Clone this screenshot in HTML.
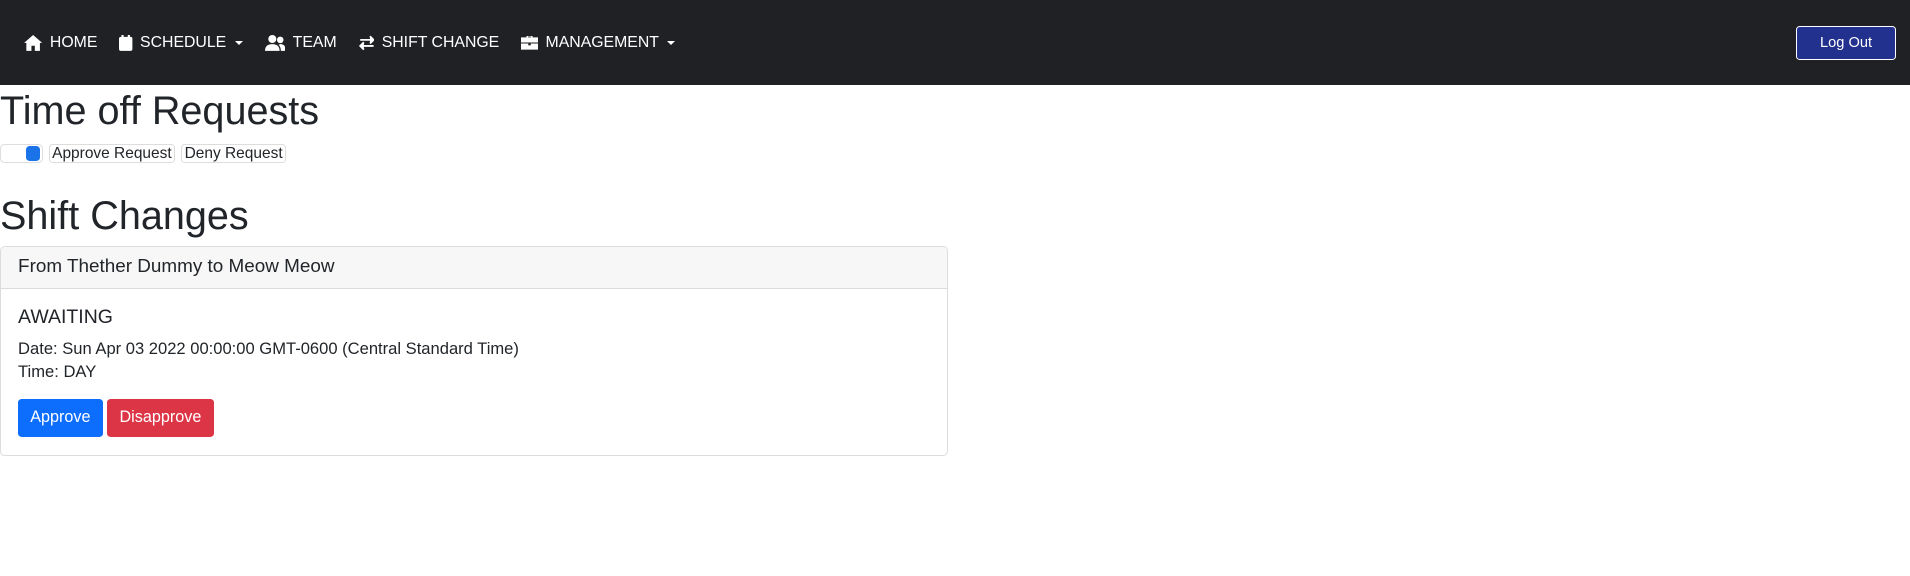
<!DOCTYPE html>
<html><head><meta charset="utf-8"><style>
html,body{margin:0;padding:0;background:#fff;overflow:hidden}
body{zoom:1.2185;font-family:"Liberation Sans",Arial,sans-serif;color:#212529;width:1568px;height:473px}
.nav{background:#1f2125;height:70px;position:relative}
.nav .items{position:absolute;left:20px;top:0;height:70px;display:flex;align-items:center;color:#fff;font-size:13px}
.nav .it{display:flex;align-items:center;margin-right:18px}
.nav svg{margin-right:6px;fill:#fff}
.caret{display:inline-block;width:0;height:0;border-left:4px solid transparent;border-right:4px solid transparent;border-top:4px solid #fff;margin-left:7px}
.logout{position:absolute;left:1474px;top:21px;width:82px;height:28px;box-sizing:border-box;border:1px solid #fff;border-radius:3px;background:#22318e;color:#fff;font-size:12px;display:flex;align-items:center;justify-content:center}
h1,h2{margin:0;font-weight:500;font-size:32.5px;line-height:1.2}
h1{position:absolute;top:72px;left:0}
h2{position:absolute;top:158px;left:0}
.row{position:absolute;top:118px;left:0;display:flex;font-size:12.7px}
.sel{width:35px;height:16px;border:1px solid #ddd;border-radius:4px;box-sizing:border-box;position:relative;margin-right:5px}
.sel i{position:absolute;right:1px;top:1px;width:12px;height:12px;background:#1a73e8;border-radius:3px}
.b{height:16px;border:1px solid #ddd;border-radius:3px;padding:0 2px;line-height:15px;margin-right:5px;box-sizing:border-box}
.card{position:absolute;left:0;top:202px;width:778px;height:172px;border:1px solid #dcdcdc;border-radius:4px;box-sizing:border-box;overflow:hidden}
.ch{background:#f7f7f7;height:34px;border-bottom:1px solid #dcdcdc;box-sizing:border-box;padding-left:14px;line-height:33px;font-size:15.5px}
.cb{padding:13px 14px;font-size:13.6px}
.t{font-size:16px;margin:1px 0 7px}
.l{line-height:19px}
.btn{display:inline-block;height:31px;line-height:31px;padding:0 10px;color:#fff;border-radius:3px;font-size:13.3px;margin-right:0}
</style></head><body>
<div class="nav"><div class="items">
<div class="it"><svg width="15" height="13" viewBox="0 0 16 14"><path d="M8 0L0 7h2v7h4.5v-4.5h3V14H14V7h2z"/></svg>HOME</div>
<div class="it"><svg width="11" height="13" viewBox="0 0 11 13"><rect x="2" y="0" width="1.8" height="3"/><rect x="7.2" y="0" width="1.8" height="3"/><rect x="0" y="1.5" width="11" height="11.5" rx="1.5"/></svg>SCHEDULE<span class="caret"></span></div>
<div class="it"><svg width="17" height="13" viewBox="0 0 17 13"><circle cx="6" cy="3.3" r="3.3"/><circle cx="12.5" cy="4" r="2.7"/><path d="M0 13c0-4 2.5-5.5 6-5.5s6 1.5 6 5.5z"/><path d="M12.5 7.5c3 0 4.5 1.5 4.5 5.5h-4c0-2-.5-4-2-5z"/></svg>TEAM</div>
<div class="it"><svg width="13" height="13" viewBox="0 0 13 13" fill="none" stroke="#fff" stroke-width="1.5"><path d="M1 4h11M9 1l3 3-3 3M12 9H1M4 6L1 9l3 3"/></svg>SHIFT CHANGE</div>
<div class="it"><svg width="14" height="12" viewBox="0 0 14 12"><path d="M4.5 2V.8h5V2H14v4.2H0V2zM5.7 2h2.6V1.2H5.7z"/><path d="M0 7h6v1.5h2V7h6v5H0z"/></svg>MANAGEMENT<span class="caret"></span></div>
</div><div class="logout">Log Out</div></div>
<h1>Time off Requests</h1>
<div class="row"><div class="sel"><i></i></div><div class="b">Approve Request</div><div class="b">Deny Request</div></div>
<h2>Shift Changes</h2>
<div class="card"><div class="ch">From Thether Dummy to Meow Meow</div>
<div class="cb"><div class="t">AWAITING</div>
<div class="l">Date: Sun Apr 03 2022 00:00:00 GMT-0600 (Central Standard Time)</div>
<div class="l">Time: DAY</div>
<div style="margin-top:13px"><span class="btn" style="background:#0d6efd">Approve</span> <span class="btn" style="background:#dc3545">Disapprove</span></div>
</div></div>
</body></html>
